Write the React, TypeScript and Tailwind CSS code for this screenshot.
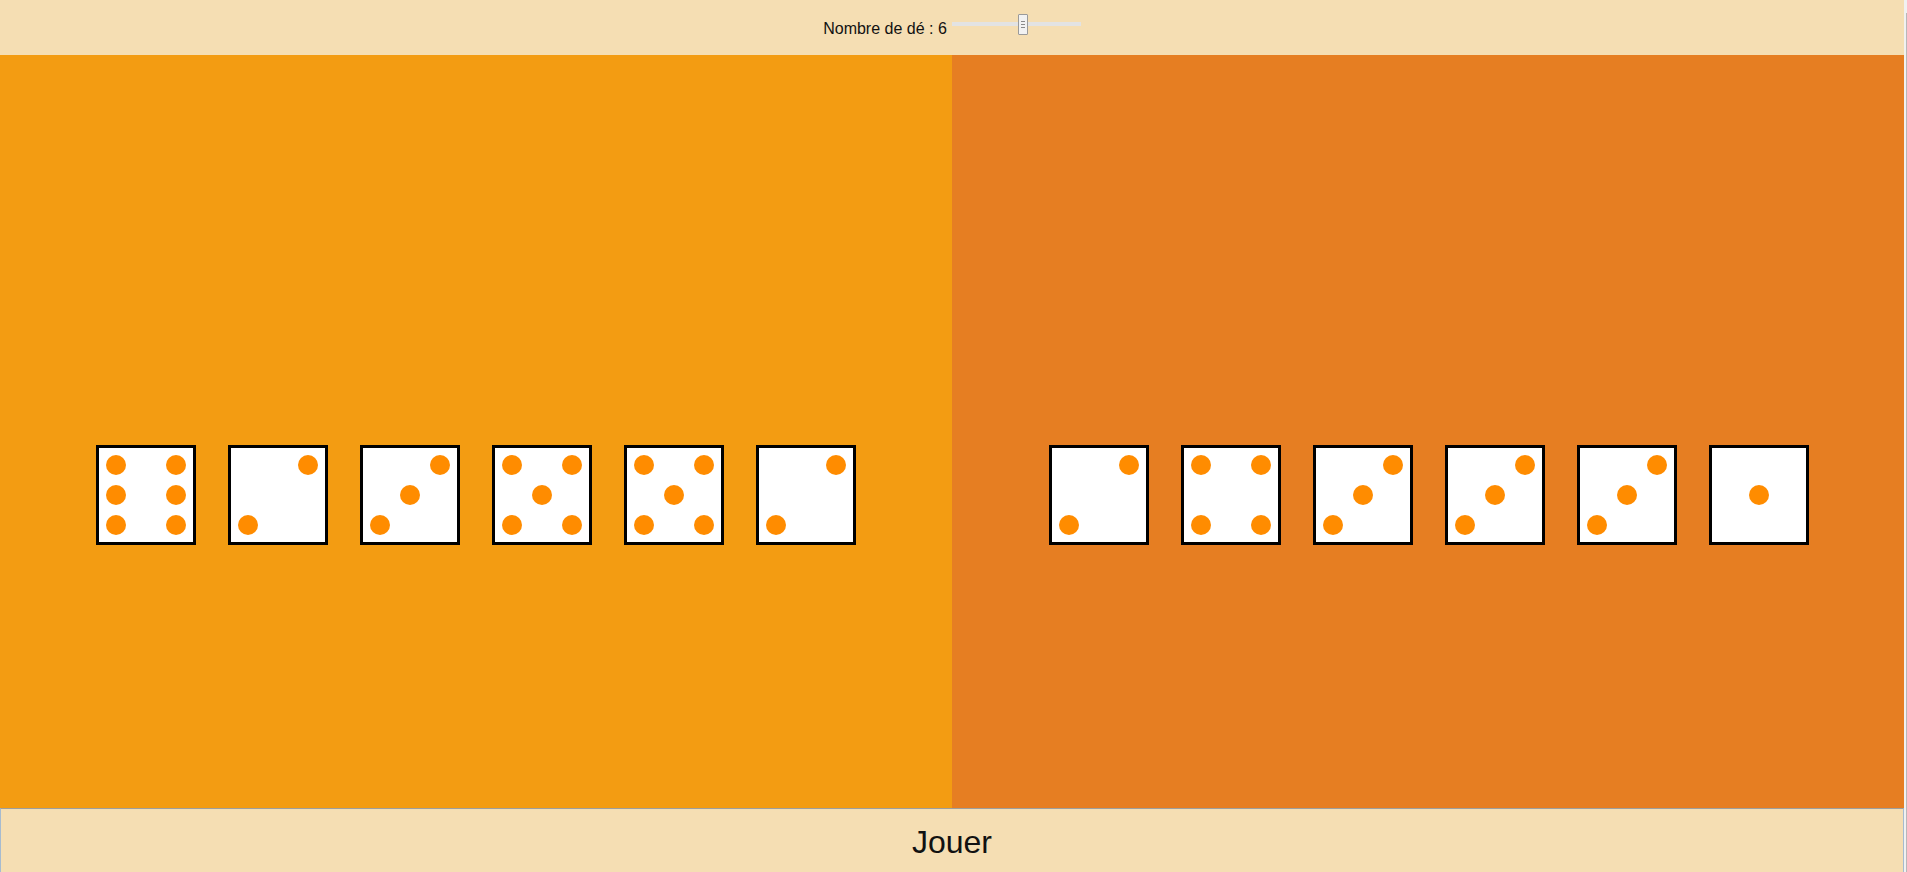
import { useState } from 'react';

// which cells of the 3x3 grid hold a pip, per face value
const FACES: Record<number, number[]> = {
  1: [4],
  2: [2, 6],
  3: [2, 4, 6],
  4: [0, 2, 6, 8],
  5: [0, 2, 4, 6, 8],
  6: [0, 2, 3, 5, 6, 8],
};

const MIN = 1;
const MAX = 10;

const roll = (n: number) => Array.from({ length: n }, () => 1 + Math.floor(Math.random() * 6));

function Die({ value }: { value: number }) {
  const pips = FACES[value] ?? [];
  return (
    <div className="box-border h-[100px] w-[100px] shrink-0 border-[3px] border-black bg-white p-[2px]">
      <div className="grid h-[90px] w-[90px] grid-cols-3 grid-rows-3">
        {Array.from({ length: 9 }, (_, i) => (
          <div key={i} className="flex items-center justify-center">
            {pips.includes(i) && <span className="block h-[20px] w-[20px] rounded-full bg-[#ff8c00]" />}
          </div>
        ))}
      </div>
    </div>
  );
}

function Slider({ value, onChange }: { value: number; onChange: (v: number) => void }) {
  const left = ((value - MIN) / (MAX - MIN)) * 119;
  return (
    <div className="relative -mt-[6px] ml-[5px] h-[21px] w-[129px]">
      <div className="absolute left-0 right-0 top-[8px] h-[4px] bg-[#e3e3e3]" />
      <div
        className="absolute top-0 flex h-[21px] w-[10px] flex-col items-center justify-center gap-[2px] rounded-[1px] border border-[#9a9a9a] bg-[#f2f2f2]"
        style={{ left }}
      >
        <span className="block h-px w-[4px] bg-[#8a8a8a]" />
        <span className="block h-px w-[4px] bg-[#8a8a8a]" />
        <span className="block h-px w-[4px] bg-[#8a8a8a]" />
      </div>
      <input
        type="range"
        min={MIN}
        max={MAX}
        value={value}
        onChange={e => onChange(Number(e.target.value))}
        className="absolute inset-0 m-0 h-full w-full cursor-pointer opacity-0"
        aria-label="Nombre de dé"
      />
    </div>
  );
}

export default function App() {
  const [count, setCount] = useState(6);
  const [left, setLeft] = useState([6, 2, 3, 5, 5, 2]);
  const [right, setRight] = useState([2, 4, 3, 3, 3, 1]);

  const changeCount = (n: number) => {
    setCount(n);
    setLeft(roll(n));
    setRight(roll(n));
  };

  const play = () => {
    setLeft(roll(count));
    setRight(roll(count));
  };

  return (
    <div className="flex h-[872px] w-full overflow-hidden font-['Liberation_Sans',Arial,sans-serif] text-black">
      <div className="flex w-[1904px] shrink-0 flex-col">
        <header className="flex h-[55px] shrink-0 items-start justify-center bg-[#f5deb3] pt-[20px]">
          <span className="text-[16px] leading-[18px] text-[#111]">Nombre de dé : {count}</span>
          <Slider value={count} onChange={changeCount} />
        </header>

        <main className="flex flex-1">
          <section className="flex w-1/2 items-start justify-center gap-8 bg-[#f39c12] pt-[390px]">
            {left.map((v, i) => (
              <Die key={i} value={v} />
            ))}
          </section>
          <section className="flex w-1/2 items-start justify-center gap-8 bg-[#e67e22] pl-[2px] pt-[390px]">
            {right.map((v, i) => (
              <Die key={i} value={v} />
            ))}
          </section>
        </main>

        <button
          type="button"
          onClick={play}
          className="flex h-[64px] shrink-0 cursor-pointer items-start justify-center border-x border-t border-x-[#a6bbd0] border-t-[#9e9e9e] bg-[#f5deb3] pt-[16px] text-[32px] leading-[34px] text-[#111]"
        >
          Jouer
        </button>
      </div>

      {/* thin scrollbar strip at the window edge */}
      <div className="flex w-[3px] shrink-0 justify-end bg-[#f1f1f1] pt-[13px]">
        <div className="w-px bg-[#b8b8b8]" />
      </div>
    </div>
  );
}
